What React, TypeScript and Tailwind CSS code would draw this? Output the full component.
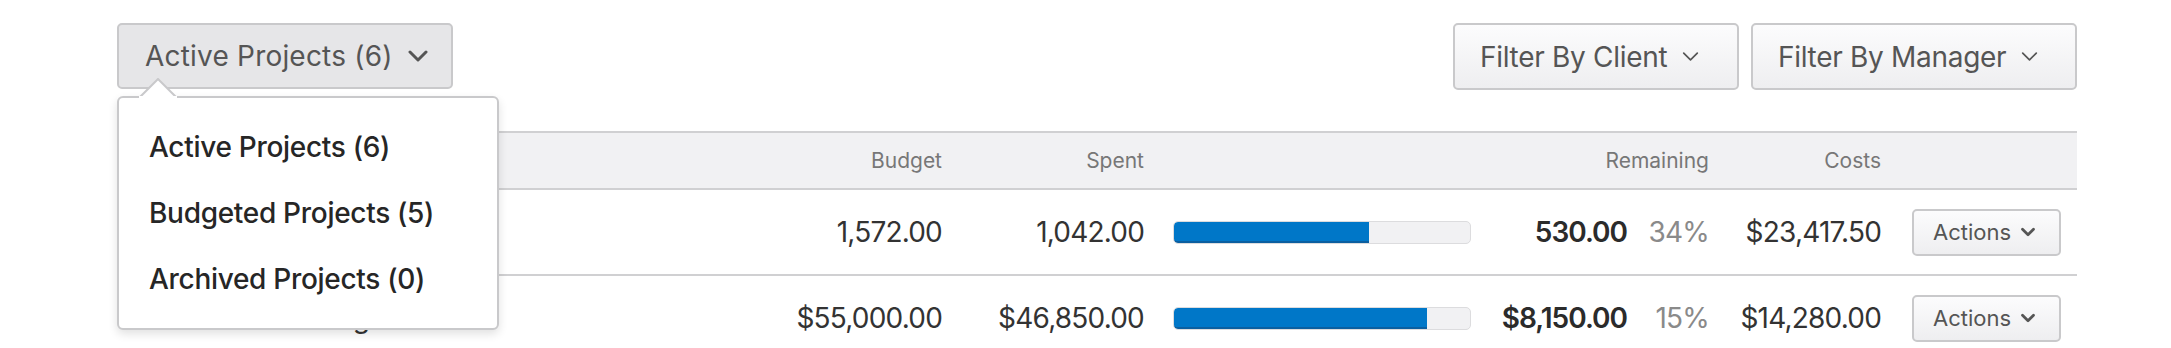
import { ChevronDown } from 'lucide-react'

const cols = 'grid grid-cols-[665px_160px_202px_327px_156px_82px_172px_195px] items-center'

const rows = [
  { name: 'Brand Guidelines', budget: '1,572.00', spent: '1,042.00', pct: 66, remaining: '530.00', left: '34%', costs: '$23,417.50' },
  { name: 'Online Marketing', budget: '$55,000.00', spent: '$46,850.00', pct: 85.5, remaining: '$8,150.00', left: '15%', costs: '$14,280.00' },
]

function Chevron({ className }: { className?: string }) {
  return (
    <svg viewBox="0 0 20 12" className={className} fill="none" stroke="currentColor" strokeLinecap="round" strokeLinejoin="round">
      <path d="M2 2l8 8 8-8" />
    </svg>
  )
}

export default function App() {
  return (
    <div className="min-h-screen bg-white font-['Inter','Liberation_Sans',sans-serif] text-[#333]">
      <div className="w-[1960px] ml-[117px] pt-[23px]">
        {/* Toolbar */}
        <div className="flex items-start justify-between">
          <div className="relative">
            <button className="flex items-center h-[66px] w-[336px] pl-[26px] rounded-[5px] border-2 border-[#c9c9cb] bg-[#e6e6e8] text-[28px] text-[#555] tracking-[0.2px]">
              Active Projects (6)
              <Chevron className="w-[20px] h-[12px] ml-[15px] stroke-[3]" />
            </button>

            {/* Menu */}
            <div className="absolute left-0 top-[73px] z-10 w-[382px] rounded-[6px] border-2 border-[#c9c9cb] bg-white py-[16px] shadow-[0_4px_10px_rgba(0,0,0,0.12)]">
              <svg className="absolute left-[20px] top-[-20px]" width="38" height="20" viewBox="0 0 38 20">
                <path d="M1 19L19 1l18 18" fill="white" stroke="#c9c9cb" strokeWidth="2" />
                <rect x="0" y="18" width="38" height="3" fill="white" />
              </svg>
              {['Active Projects (6)', 'Budgeted Projects (5)', 'Archived Projects (0)'].map((t) => (
                <div key={t} className="flex items-center h-[66px] pl-[30px] text-[28px] font-medium text-[#262626] tracking-[-0.3px]">
                  {t}
                </div>
              ))}
            </div>
          </div>

          <div className="flex gap-[12px]">
            <button className="flex items-center h-[67px] w-[286px] pl-[25px] rounded-[5px] border-2 border-[#c9c9cb] bg-gradient-to-b from-[#fcfcfd] to-[#eeeef0] text-[28px] text-[#555] tracking-[-0.3px]">
              Filter By Client
              <Chevron className="w-[17px] h-[11px] ml-[15px] stroke-2" />
            </button>
            <button className="flex items-center h-[67px] w-[326px] pl-[25px] rounded-[5px] border-2 border-[#c9c9cb] bg-gradient-to-b from-[#fcfcfd] to-[#eeeef0] text-[28px] text-[#555] tracking-[-0.3px]">
              Filter By Manager
              <Chevron className="w-[17px] h-[11px] ml-[15px] stroke-2" />
            </button>
          </div>
        </div>

        {/* Table */}
        <div className="mt-[41px]">
          <div className={`${cols} h-[59px] border-y-2 border-[#d0d0d2] bg-[#f1f1f3] text-[21px] text-[#777]`}>
            <div />
            <div className="text-right">Budget</div>
            <div className="text-right">Spent</div>
            <div />
            <div className="col-span-2 text-right">Remaining</div>
            <div className="text-right">Costs</div>
            <div />
          </div>

          {rows.map((r) => (
            <div key={r.name} className={`${cols} h-[86px] border-b-2 border-[#d0d0d2] text-[28px] tracking-[-0.8px]`}>
              <div className="pl-[40px] text-[#333]">{r.name}</div>
              <div className="text-right">{r.budget}</div>
              <div className="text-right">{r.spent}</div>
              <div className="pl-[29px]">
                <div className="h-[23px] w-[298px] overflow-hidden rounded-[5px] border border-[#dcdcde] bg-[#f1f1f3]">
                  <div className="h-full rounded-l-[4px] border-b-2 border-[#0b5fa0] bg-[#0077c8]" style={{ width: `${r.pct}%` }} />
                </div>
              </div>
              <div className="text-right font-semibold text-[#2b2b2b] tracking-[-1px]">{r.remaining}</div>
              <div className="text-right text-[#8a8a8a]">{r.left}</div>
              <div className="text-right">{r.costs}</div>
              <div className="pl-[31px]">
                <button className="flex items-center h-[47px] w-[149px] pl-[19px] rounded-[5px] border-2 border-[#c9c9cb] bg-gradient-to-b from-[#fcfcfd] to-[#eeeef0] text-[22px] text-[#555] tracking-normal">
                  Actions
                  <ChevronDown className="w-[22px] h-[22px] ml-[6px]" strokeWidth={3} />
                </button>
              </div>
            </div>
          ))}
        </div>
      </div>
    </div>
  )
}
